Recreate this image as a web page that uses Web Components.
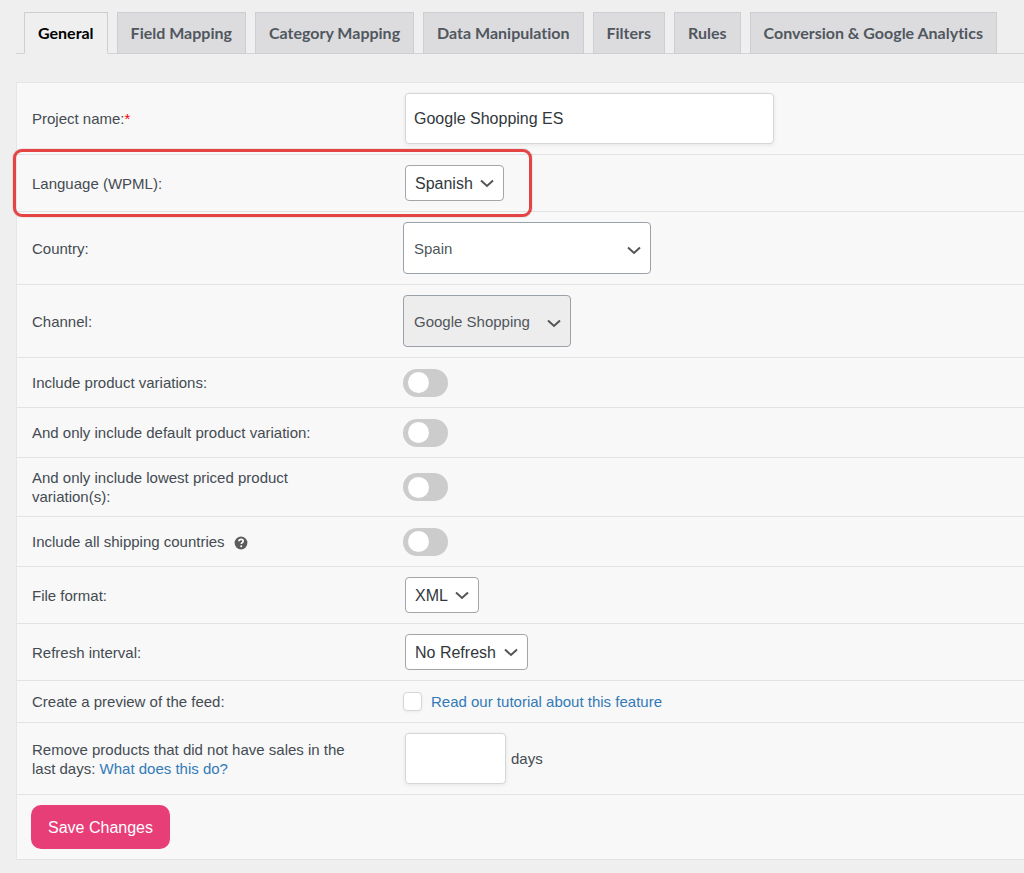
<!DOCTYPE html>
<html lang="en">
<head>
<meta charset="utf-8">
<meta name="viewport" content="width=device-width, initial-scale=1">
<title>Project settings</title>
<style>
  body { margin: 0; background: #efefef; font-family: "Liberation Sans", Arial, sans-serif; font-size: 15px; line-height: 19px; color: #444b52; }
</style>
</head>
<body>
<project-settings></project-settings>

<template id="tab-bar-tpl">
  <style>
    :host { display: flex; gap: 9px; padding: 12px 8px 0; border-bottom: 1px solid #d2d3d5; }
  </style>
  <slot></slot>
</template>

<template id="tab-item-tpl">
  <style>
    :host { display: block; flex: none; margin-bottom: -1px; }
    a {
      display: block; padding: 8px 13px; border: 1px solid #ccced1; background: #dcdcde;
      color: #50575e; font: 700 16px/24px Lato, sans-serif; font-variant-ligatures: none; text-decoration: none; white-space: nowrap;
    }
    :host([active]) a { background: #efefef; border-bottom-color: #efefef; color: #000; }
  </style>
  <a href="#"><slot></slot></a>
</template>

<template id="settings-row-tpl">
  <style>
    :host { display: grid; grid-template-columns: 371px 1fr; align-items: center; position: relative;
      box-sizing: border-box; padding: 10px 15px; border-bottom: 1px solid #e2e3e4; }
    :host([switch]) { min-height: 50px; }
    .label { padding-right: 40px; }
    .control { display: flex; align-items: center; }
    :host([highlight])::before {
      content: ""; position: absolute; box-sizing: border-box; top: -6px; left: -4px; width: 519px; bottom: -6px;
      border: 3px solid #e44444; border-radius: 9px; box-shadow: 0 0 1px #8a4a4a; pointer-events: none; z-index: 1;
    }
  </style>
  <div class="label"><slot name="label"></slot></div>
  <div class="control"><slot></slot></div>
</template>

<template id="help-icon-tpl">
  <style>
    :host { display: inline-block; width: 14px; height: 14px; margin-left: 5px; vertical-align: -3px; }
    svg { display: block; }
  </style>
  <svg width="14" height="14" viewBox="0 0 14 14" aria-hidden="true">
    <circle cx="7" cy="7" r="6.4" fill="#5c5c5c"/>
    <path d="M4.9 5.3C5 3.9 6 3.3 7.1 3.3c1.200 0 2.100.7 2.100 1.800 0 1.600-1.900 1.500-1.900 3" fill="none" stroke="#fff" stroke-width="1.700"/>
    <circle cx="7.200" cy="10.200" r="1" fill="#fff"/>
  </svg>
</template>

<template id="project-settings-tpl">
  <style>
    :host { display: block; padding: 0 0 13px 16px; }
    form { display: block; margin: 28px 0 0; background: #f8f8f8; border: solid #e6e6e7; border-width: 1px 0 0 1px; }
    a { color: #337ab7; text-decoration: none; }
    .required { color: #f00; }
    input, select, button { box-sizing: border-box; margin: 0; font: inherit; }
    input[type=text], input[type=number] {
      height: 51px; margin-left: 2px; padding: 0 8px; border: 1px solid #d5d6d8; border-radius: 4px;
      background: #fff; color: #32373c; font-size: 16px; box-shadow: 0 1px 4px rgba(0,0,0,.08); appearance: textfield;
    }
    #name { width: 369px; }
    #days { width: 101px; margin-right: 5px; }
    select {
      appearance: none; height: 36px; margin-left: 2px; padding: 0 28px 0 9px; border: 1px solid #a3a5a8; border-radius: 4px;
      color: #32373c; font-size: 16px;
      background: #fff url("data:image/svg+xml,%3Csvg xmlns='http://www.w3.org/2000/svg' viewBox='0 0 14 14'%3E%3Cpath d='M1 4.500 7 10l6-5.500' fill='none' stroke='%23555' stroke-width='2'/%3E%3C/svg%3E") no-repeat right 9px center / 14px 14px;
    }
    select.large { height: 52px; margin-left: 0; padding-left: 10px; border-color: #9aa1a9; color: #50565c; font-size: 15px; opacity: 1; background-position: right 9px top 20px; }
    #language { width: 99px; }
    #country { width: 248px; }
    #channel { width: 168px; background-color: #ededed; }
    #format { width: 74px; }
    #refresh { width: 123px; }
    input[type=checkbox] { appearance: none; flex: none; }
    .switch { width: 45px; height: 28px; border-radius: 14px; background: #ccc; display: flex; align-items: center; padding: 0 5px; }
    .switch::before { content: ""; width: 21px; height: 21px; border-radius: 50%; background: #fff; }
    .switch:checked { background: #2196f3; justify-content: flex-end; }
    .box { width: 19px; height: 19px; margin: 1px 9px 1px 0; border: 1px solid #d5d6d8; border-radius: 4px; background: #fff; box-shadow: 0 1px 3px rgba(0,0,0,.06); }
    footer { padding: 10px 14px; border-bottom: 1px solid #e2e3e4; }
    button { display: block; height: 44px; min-width: 139px; padding: 0 16px; border: 0; border-radius: 10px; background: #e83e78; color: #fff; font-size: 16px; }
  </style>
  <tab-bar>
    <tab-item active>General</tab-item>
    <tab-item>Field Mapping</tab-item>
    <tab-item>Category Mapping</tab-item>
    <tab-item>Data Manipulation</tab-item>
    <tab-item>Filters</tab-item>
    <tab-item>Rules</tab-item>
    <tab-item>Conversion &amp; Google Analytics</tab-item>
  </tab-bar>
  <form>
    <settings-row>
      <label slot="label" for="name">Project name:<span class="required">*</span></label>
      <input id="name" type="text" value="Google Shopping ES">
    </settings-row>
    <settings-row highlight>
      <label slot="label" for="language">Language (WPML):</label>
      <select id="language"><option>Spanish</option></select>
    </settings-row>
    <settings-row>
      <label slot="label" for="country">Country:</label>
      <select id="country" class="large"><option>Spain</option></select>
    </settings-row>
    <settings-row>
      <label slot="label" for="channel">Channel:</label>
      <select id="channel" class="large" disabled><option>Google Shopping</option></select>
    </settings-row>
    <settings-row switch>
      <label slot="label" for="variations">Include product variations:</label>
      <input id="variations" class="switch" type="checkbox">
    </settings-row>
    <settings-row switch>
      <label slot="label" for="default-variation">And only include default product variation:</label>
      <input id="default-variation" class="switch" type="checkbox">
    </settings-row>
    <settings-row switch>
      <label slot="label" for="lowest">And only include lowest priced product variation(s):</label>
      <input id="lowest" class="switch" type="checkbox">
    </settings-row>
    <settings-row switch>
      <label slot="label" for="shipping">Include all shipping countries <help-icon></help-icon></label>
      <input id="shipping" class="switch" type="checkbox">
    </settings-row>
    <settings-row>
      <label slot="label" for="format">File format:</label>
      <select id="format"><option>XML</option></select>
    </settings-row>
    <settings-row>
      <label slot="label" for="refresh">Refresh interval:</label>
      <select id="refresh"><option>No Refresh</option></select>
    </settings-row>
    <settings-row>
      <label slot="label" for="preview">Create a preview of the feed:</label>
      <input id="preview" class="box" type="checkbox"><a href="#">Read our tutorial about this feature</a>
    </settings-row>
    <settings-row>
      <div slot="label"><label for="days">Remove products that did not have sales in the <span>last days:</span></label> <a href="#">What does this do?</a></div>
      <input id="days" type="number"><span>days</span>
    </settings-row>
    <footer><button type="button">Save Changes</button></footer>
  </form>
</template>

<script>
  for (const name of ["tab-item", "tab-bar", "help-icon", "settings-row", "project-settings"]) {
    customElements.define(name, class extends HTMLElement {
      constructor() {
        super();
        const tpl = document.getElementById(name + "-tpl");
        this.attachShadow({ mode: "open" }).append(tpl.content.cloneNode(true));
      }
    });
  }
</script>
</body>
</html>
